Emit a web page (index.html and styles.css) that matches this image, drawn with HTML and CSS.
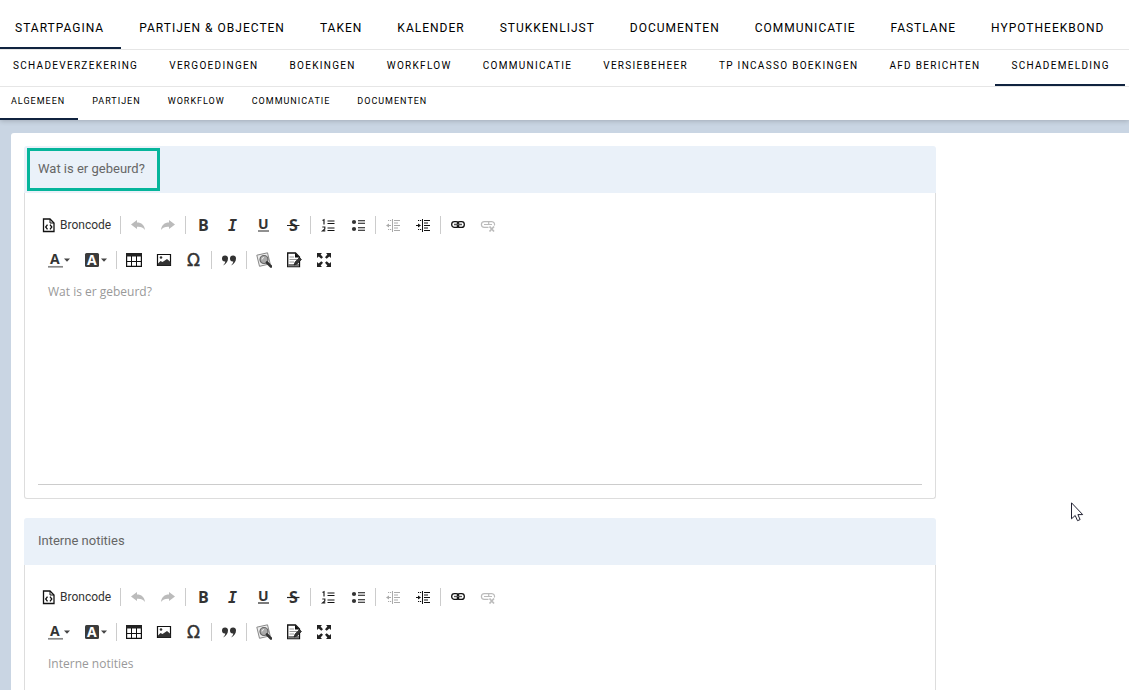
FILE: index.html
```html
<!DOCTYPE html>
<html lang="nl">
<head>
<meta charset="utf-8">
<meta name="viewport" content="width=device-width, initial-scale=1">
<title>Schademelding</title>
<link rel="stylesheet" href="styles.css">
<script src="toolbar.js" defer></script>
</head>
<body>
<header class="top">
  <nav class="nav nav-main" aria-label="Hoofdmenu">
    <a href="#" class="active">STARTPAGINA</a><a href="#">PARTIJEN &amp; OBJECTEN</a><a href="#">TAKEN</a><a href="#">KALENDER</a><a href="#">STUKKENLIJST</a><a href="#">DOCUMENTEN</a><a href="#">COMMUNICATIE</a><a href="#">FASTLANE</a><a href="#">HYPOTHEEKBOND</a>
  </nav>
  <nav class="nav nav-sub" aria-label="Submenu">
    <a href="#">SCHADEVERZEKERING</a><a href="#">VERGOEDINGEN</a><a href="#">BOEKINGEN</a><a href="#">WORKFLOW</a><a href="#">COMMUNICATIE</a><a href="#">VERSIEBEHEER</a><a href="#">TP INCASSO BOEKINGEN</a><a href="#">AFD BERICHTEN</a><a href="#" class="active">SCHADEMELDING</a>
  </nav>
  <nav class="nav nav-tabs" aria-label="Tabbladen">
    <a href="#" class="active">ALGEMEEN</a><a href="#">PARTIJEN</a><a href="#">WORKFLOW</a><a href="#">COMMUNICATIE</a><a href="#">DOCUMENTEN</a>
  </nav>
</header>

<main class="page">
  <section class="card">
    <div class="card-head"><label for="gebeurd">Wat is er gebeurd?</label><span class="highlight"></span></div>
    <div class="card-body">
      <div class="toolbar" role="toolbar" aria-label="Opmaak"></div>
      <textarea id="gebeurd" placeholder="Wat is er gebeurd?"></textarea>
    </div>
  </section>
  <section class="card">
    <div class="card-head"><label for="notities">Interne notities</label></div>
    <div class="card-body">
      <div class="toolbar" role="toolbar" aria-label="Opmaak"></div>
      <textarea id="notities" placeholder="Interne notities"></textarea>
    </div>
  </section>
</main>

<svg class="pointer" viewBox="0 0 13 20" aria-hidden="true"><path d="M.5.800v16l3.700-3.300 2.300 5.200 2.600-1.100-2.200-5h4.800z" fill="#fff" stroke="#223"/></svg>
</body>
</html>
```
FILE: styles.css
```css
* {
  box-sizing: border-box;
}

body {
  margin: 0;
  height: 100vh;
  overflow: hidden;
  display: flex;
  flex-direction: column;
  background: #c9d5e3;
  font-family: Roboto, sans-serif;
  color: #666;
}

.top {
  flex: none;
  background: #fff;
  box-shadow: 0 1px 5px rgba(0, 0, 0, 0.2);
}

.nav {
  display: flex;
  padding-right: 4px;
  overflow: hidden;
  border-bottom: 1px solid #e6e6e6;
}

.nav a {
  flex: none;
  color: #000;
  text-decoration: none;
  white-space: nowrap;
  border-bottom: 2px solid transparent;
}

.nav a:first-child {
  margin-left: -3px;
}

.nav a.active {
  border-bottom-color: #10233f;
}

.nav-main a {
  padding: 19px 17px 10px 18px;
  font-size: 12px;
  line-height: 18px;
  letter-spacing: 1px;
}

.nav-sub a {
  padding: 8px 15px 10px 16px;
  font-size: 10px;
  line-height: 16px;
  letter-spacing: 0.13em;
}

.nav-tabs {
  border-bottom: 0;
}

.nav-tabs a {
  padding: 6px 13px 9px 14px;
  font-size: 9px;
  line-height: 16px;
  letter-spacing: 1px;
}

.page {
  flex: 1;
  min-height: 0;
  overflow: hidden;
  margin: 13px 0 0 11px;
  padding: 13px;
  background: #fff;
  border-radius: 3px 0 0 0;
}

.card {
  max-width: 912px;
  margin-bottom: 19px;
}

.card-head {
  position: relative;
  padding: 13px 14px 15px;
  background: #eaf1f9;
  border-radius: 3px 3px 0 0;
  font-size: 13px;
  line-height: 19px;
}

.highlight {
  position: absolute;
  left: 3px;
  top: 2px;
  width: 133px;
  height: 43px;
  border: 3px solid #06b59b;
}

.card-body {
  padding: 18px 13px 13px;
  border: 1px solid #ddd;
  border-top: 0;
  border-radius: 0 0 3px 3px;
}

.toolbar {
  display: grid;
  gap: 7px;
  padding-left: 3px;
}

.row {
  display: flex;
  align-items: center;
}

.tool {
  display: flex;
  align-items: center;
  height: 28px;
  padding: 0 7px;
  border: 0;
  background: none;
  color: #444;
  font: 12px/16px Roboto, sans-serif;
}

.tool-source {
  gap: 3px;
  padding-left: 0;
  color: #333;
}

.tool-menu {
  gap: 1px;
  padding: 0 8px 0 6px;
}

.tool-menu + .tool-menu {
  padding-right: 7px;
}

.icon {
  width: 16px;
  height: 16px;
}

.caret {
  width: 6px;
  height: 4px;
}

.separator {
  width: 1px;
  height: 18px;
  margin: 0 2px;
  background: #ccc;
}

.letter {
  font: 700 16px "Open Sans", sans-serif;
  fill: #333;
}

.letter.small {
  font-size: 14px;
}

.letter.light {
  fill: #fff;
}

.letter.slab {
  font: italic 700 15px "DejaVu Sans Mono", monospace;
}

.omega {
  font: 17px "DejaVu Sans", sans-serif;
  fill: #333;
  stroke: #333;
  stroke-width: 0.4;
}

textarea {
  display: block;
  width: 100%;
  height: 211px;
  padding: 10px;
  border: 0;
  border-bottom: 1px solid #ccc;
  outline: 0;
  resize: none;
  background: none;
  font: 12px/16px "Open Sans", sans-serif;
  color: #333;
}

textarea::placeholder {
  color: #999;
  opacity: 1;
}

.pointer {
  position: absolute;
  left: 1071px;
  top: 502px;
  width: 13px;
  height: 20px;
}
```
FILE: toolbar.js
```js
const icons = {
  source: '<path d="M2.500 2h6.500l4 4v8.500H2.500z" fill="none" stroke="#111" stroke-width="1.300"/><path d="M9 2v4h4" fill="none" stroke="#111"/><path d="M6.500 7.700L4.700 10l1.800 2.300M9 7.700l1.800 2.300L9 12.300" fill="none" stroke="#111" stroke-width="1.300"/>',
  undo: '<path d="M1 7.500L7 3v2.500c4.500 0 7.500 2.500 8 7.500-2-2.700-4.500-3.500-8-3.200V12z" fill="#bbb"/>',
  redo: '<path d="M15 7.500L9 3v2.500C4.500 5.500 1.500 8 1 13c2-2.700 4.500-3.500 8-3.200V12z" fill="#bbb"/>',
  bold: '<text x="3" y="14" class="letter">B</text>',
  italic: '<text x="3" y="14" class="letter slab">I</text>',
  underline: '<text x="3" y="12" class="letter small">U</text><path d="M3 14h11" stroke="#222" stroke-width="1.200"/>',
  strike: '<text x="4" y="14" class="letter">S</text><path d="M2 8.500h12.500" stroke="#222" stroke-width="1.200"/>',
  numbers: '<path d="M2.500 3.500L4 2.700v4.800M2.300 10h2.500v2l-2.200 1.800h2.700" fill="none" stroke="#222" stroke-width="1.200"/><path d="M7.500 4h7M7.500 6.500h7M7.500 11h7M7.500 13.500h7" stroke="#111"/>',
  bullets: '<circle cx="4" cy="5" r="2.100" fill="#333"/><circle cx="4" cy="12" r="2.100" fill="#333"/><path d="M8 3.700h7M8 6.200h7M8 10.700h7M8 13.200h7" stroke="#111" stroke-width="1.100"/>',
  outdent: '<g stroke="#aaa" fill="none"><path d="M7.500 2v13M9 3.500h6M9 6h4M9 8.500h6M9 11h4M9 13.500h6"/><path d="M3 3.500h1.200M5 3.500h1.200M3 12.500h1.200M5 12.500h1.200M2 8.500h4"/></g><path d="M1 8.500l3-2v4z" fill="#aaa"/>',
  indent: '<g stroke="#111" fill="none"><path d="M7.500 2v13M9 3.500h6M9 6h4M9 8.500h6M9 11h4M9 13.500h6"/><path d="M3 3.500h1.200M5 3.500h1.200M3 12.500h1.200M5 12.500h1.200M1 8.500h4"/></g><path d="M6 8.500l-3-2v4z" fill="#111"/>',
  link: '<g fill="none" stroke="#111" stroke-width="1.300"><rect x="1.700" y="4.600" width="7" height="5.800" rx="2.700"/><rect x="7.300" y="4.600" width="7" height="5.800" rx="2.700"/></g><path d="M4 7.500h8" stroke="#555" stroke-width="1.300"/>',
  unlink: '<g fill="none" stroke="#bbb" stroke-width="1.200"><path d="M8.500 10.400H4.300a2.800 2.800 0 010-5.800h7.400a2.800 2.800 0 012.600 4M8.700 5v2M4 7.500h8"/><path d="M9.500 9.500l4.500 5M14 9.500l-4.500 5" stroke-width="1.700"/></g>',
  color: '<text x="3" y="12" class="letter small">A</text><path d="M1 14.800h15" stroke="#888" stroke-width="1.700"/>',
  background: '<rect x="1" y="1" width="14" height="14" rx="1.500" fill="#3b3b3b"/><text x="3" y="13" class="letter small light">A</text>',
  table: '<path d="M.6 1.600h14.800v12.800H.6z" fill="#fff" stroke="#111" stroke-width="1.200"/><path d="M0 1h16v3.500H0z" fill="#222"/><path d="M1 9.500h14M5.500 4v10M10.500 4v10" stroke="#111"/>',
  image: '<path d="M1.500 2.500h13v11h-13z" fill="#fff" stroke="#111" stroke-width="1.200"/><circle cx="5" cy="5.500" r="1.300" fill="#333"/><path d="M2 11.500L4.500 9l2 1L11 7l3.500 3v3.500H2z" fill="#333"/>',
  omega: '<text x="1" y="14" class="omega">Ω</text>',
  quote: '<path d="M4 3.500a2.800 2.800 0 013 3c0 3-2 5.500-5 7 1.300-1.500 2.200-2.700 2.300-4A3 3 0 011 6.500a3 3 0 013-3zM12 3.500a2.800 2.800 0 013 3c0 3-2 5.500-5 7 1.300-1.500 2.200-2.700 2.300-4A3 3 0 019 6.500a3 3 0 013-3z" fill="#333"/>',
  preview: '<path d="M.8 3.200L11.500.8l2.700 11L3.500 14.300z" fill="#eee" stroke="#888"/><circle cx="8" cy="7.500" r="4" fill="#aaa" stroke="#666" stroke-width="1.200"/><path d="M6 7.500a2 2 0 012-2" stroke="#eee" fill="none"/><path d="M11 10.500l4 4" stroke="#333" stroke-width="2.600" stroke-linecap="round"/>',
  template: '<path d="M1.700 1h7.800l4 4v9.500H1.700z" fill="#fff" stroke="#111" stroke-width="1.300"/><path d="M9 1v4.500h4.500z" fill="#111"/><path d="M3.500 5H8M3.500 7.500H11M3.500 10H8" stroke="#999"/><path d="M2 12h11v2.500H2z" fill="#777"/><path d="M8 13l1-3 4.500-4.500 2 2L11 12z" fill="#333" stroke="#111" stroke-width=".6"/>',
  maximize: '<path d="M1 1h5L4.600 2.600 7 5.200 5.300 6.800 2.700 4.500 1 6zM15 1h-5l1.400 1.600L9 5.200l1.700 1.600 2.600-2.300L15 6zM1 15h5l-1.400-1.600L7 10.800 5.300 9.200l-2.600 2.300L1 10zM15 15h-5l1.400-1.600L9 10.800l1.700-1.600 2.600 2.300L15 10z" fill="#222"/>'
};

const rows = [
  ["source:Broncode", "|", "undo:Ongedaan maken", "redo:Opnieuw", "|", "bold:Vet", "italic:Cursief", "underline:Onderstreept", "strike:Doorhalen", "|", "numbers:Genummerde lijst", "bullets:Opsomming", "|", "outdent:Inspringing verkleinen", "indent:Inspringing vergroten", "|", "link:Link", "unlink:Link verwijderen"],
  ["color:Tekstkleur", "background:Achtergrondkleur", "|", "table:Tabel", "image:Afbeelding", "omega:Speciaal teken", "|", "quote:Citaat", "|", "preview:Voorbeeld", "template:Sjabloon", "maximize:Maximaliseren"]
];

const caret = '<svg class="caret" viewBox="0 0 6 4" aria-hidden="true"><path d="M0 .5h6L3 3.700z" fill="#444"/></svg>';

function tool(item) {
  if (item === "|") return '<span class="separator"></span>';
  const [name, title] = item.split(":");
  const icon = `<svg class="icon" viewBox="0 0 16 16" aria-hidden="true">${icons[name]}</svg>`;
  if (name === "source") return `<button type="button" class="tool tool-source">${icon}${title}</button>`;
  if (name === "color" || name === "background") {
    return `<button type="button" class="tool tool-menu" aria-label="${title}">${icon}${caret}</button>`;
  }
  return `<button type="button" class="tool" aria-label="${title}">${icon}</button>`;
}

document.querySelectorAll(".toolbar").forEach((bar) => {
  bar.innerHTML = rows.map((row) => `<div class="row">${row.map(tool).join("")}</div>`).join("");
});
```
